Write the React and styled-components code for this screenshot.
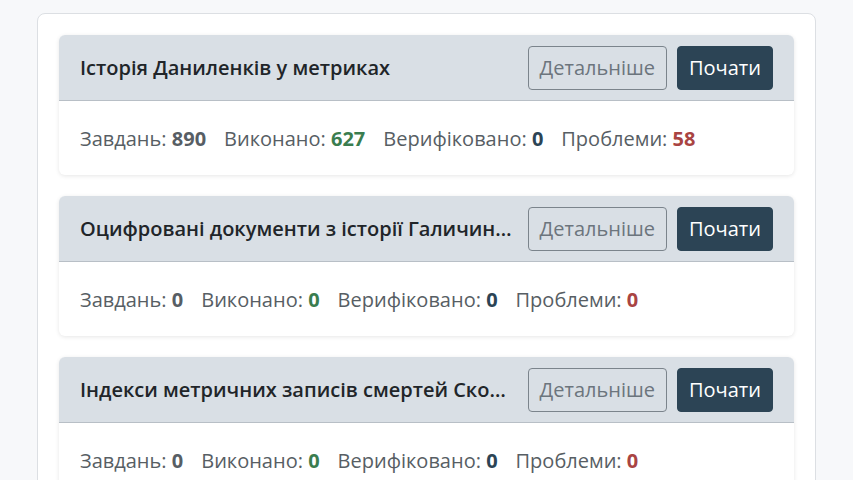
import React from "react";
import styled, { createGlobalStyle } from "styled-components";

const Global = createGlobalStyle`
  html, body { margin: 0; padding: 0; background: #f7f8fa; }
  body { font-family: "Open Sans", "Noto Sans", sans-serif; }
  * { box-sizing: border-box; }
`;

const Page = styled.div`
  padding: 13px 37px 0 37px;
  height: 480px;
  overflow: hidden;
`;

const Outer = styled.div`
  background: #fff;
  border: 1px solid #dcdfe3;
  border-radius: 8px;
  padding: 21px 21px;
  display: flex;
  flex-direction: column;
  gap: 21px;
`;

const Card = styled.div`
  background: #fff;
  border-radius: 6px;
  box-shadow: 0 1px 4px rgba(0, 0, 0, 0.1);
  overflow: hidden;
`;

const Header = styled.div`
  display: flex;
  align-items: center;
  gap: 13px;
  height: 66px;
  padding: 0 21px;
  background: #d9dfe5;
  border-bottom: 1px solid #b8bfc6;
`;

const Title = styled.div`
  flex: 1;
  min-width: 0;
  font-size: 20px;
  font-weight: 600;
  color: #212529;
  white-space: nowrap;
  overflow: hidden;
  text-overflow: ellipsis;
`;

const Actions = styled.div`
  display: flex;
  gap: 10px;
  flex-shrink: 0;
`;

const Button = styled.button`
  font-family: inherit;
  font-size: 20px;
  height: 44px;
  padding: 0 11px;
  border-radius: 4px;
  cursor: pointer;
  border: 1px solid ${(p) => (p.$primary ? "#2c4455" : "#7b848c")};
  background: ${(p) => (p.$primary ? "#2c4455" : "transparent")};
  color: ${(p) => (p.$primary ? "#fff" : "#6c757d")};
`;

const Body = styled.div`
  display: flex;
  align-items: center;
  gap: 18px;
  height: 74px;
  padding: 0 21px;
  font-size: 20px;
  color: #575e64;
`;

const Stat = styled.span`
  white-space: nowrap;
`;

const Num = styled.b`
  font-weight: 700;
  color: ${(p) => p.$color};
`;

const colors = {
  total: "#575e64",
  done: "#3a7d4f",
  verified: "#2c4455",
  problems: "#a94442",
};

const projects = [
  { title: "Історія Даниленків у метриках", total: 890, done: 627, verified: 0, problems: 58 },
  { title: "Оцифровані документи з історії Галичини та Поділля", total: 0, done: 0, verified: 0, problems: 0 },
  { title: "Індекси метричних записів смертей Сколівського деканату", total: 0, done: 0, verified: 0, problems: 0 },
];

export default function App() {
  return (
    <>
      <Global />
      <Page>
        <Outer>
          {projects.map((p, i) => (
            <Card key={i}>
              <Header>
                <Title>{p.title}</Title>
                <Actions>
                  <Button>Детальніше</Button>
                  <Button $primary>Почати</Button>
                </Actions>
              </Header>
              <Body>
                <Stat>Завдань: <Num $color={colors.total}>{p.total}</Num></Stat>
                <Stat>Виконано: <Num $color={colors.done}>{p.done}</Num></Stat>
                <Stat>Верифіковано: <Num $color={colors.verified}>{p.verified}</Num></Stat>
                <Stat>Проблеми: <Num $color={colors.problems}>{p.problems}</Num></Stat>
              </Body>
            </Card>
          ))}
        </Outer>
      </Page>
    </>
  );
}
